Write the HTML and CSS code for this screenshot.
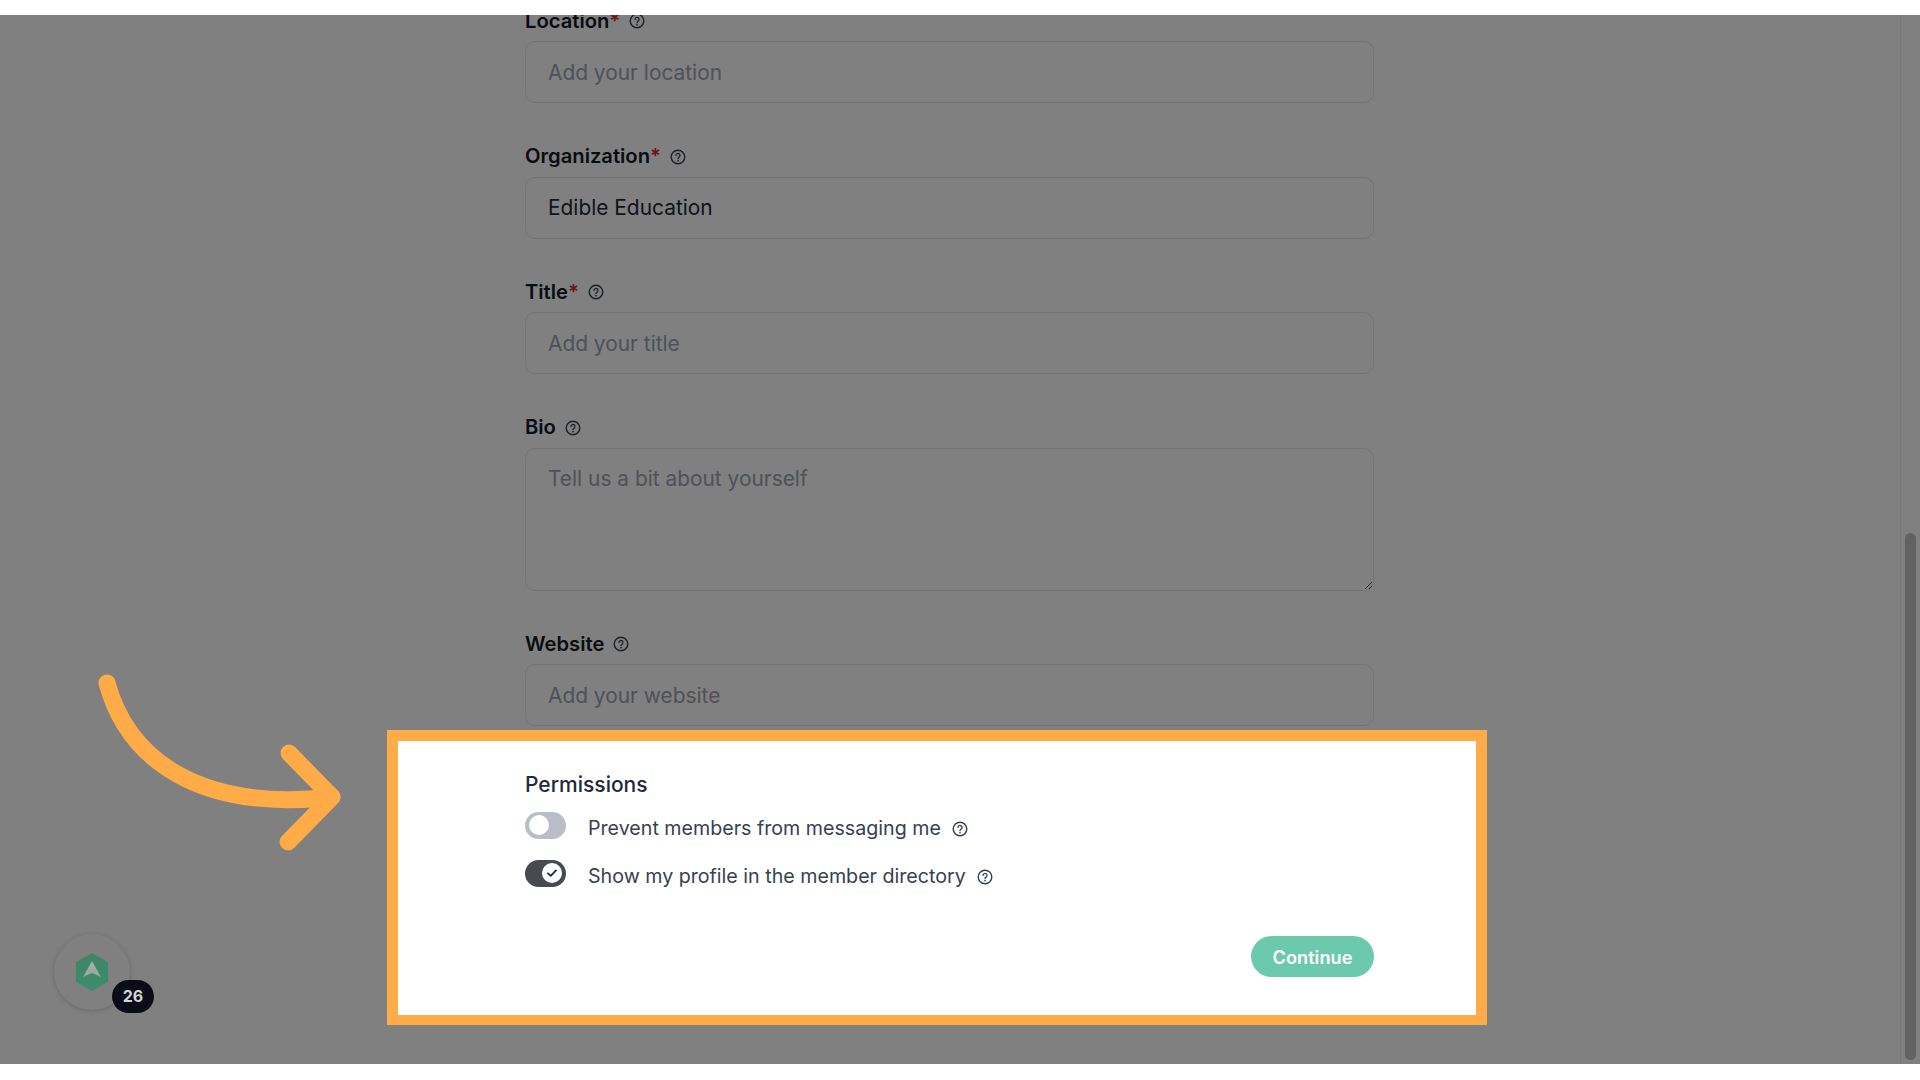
FILE: index.html
```html
<!DOCTYPE html>
<html lang="en">
<head>
  <meta charset="UTF-8">
  <title>Complete your profile</title>
  <link rel="stylesheet" href="styles.css">
</head>
<body>
  <svg class="icon-defs" width="0" height="0">
    <symbol id="help" viewBox="0 0 16 16">
      <circle cx="8" cy="8" r="6.8" fill="none" stroke="currentColor" stroke-width="1.4"/>
      <path d="M6 6.4a2 2 0 1 1 3.1 1.7c-.7.4-1.1.8-1.1 1.5" fill="none" stroke="currentColor" stroke-width="1.3" stroke-linecap="round"/>
      <circle cx="8" cy="11.6" r=".85" fill="currentColor"/>
    </symbol>
  </svg>

  <div class="stage">
    <form class="form">
      <div class="field">
        <label class="label">Location<span class="req">*</span> <svg class="help"><use href="#help"/></svg></label>
        <input class="input" type="text" placeholder="Add your location">
      </div>
      <div class="field">
        <label class="label">Organization<span class="req">*</span> <svg class="help"><use href="#help"/></svg></label>
        <input class="input" type="text" value="Edible Education">
      </div>
      <div class="field">
        <label class="label">Title<span class="req">*</span> <svg class="help"><use href="#help"/></svg></label>
        <input class="input" type="text" placeholder="Add your title">
      </div>
      <div class="field">
        <label class="label">Bio <svg class="help"><use href="#help"/></svg></label>
        <textarea class="input textarea" placeholder="Tell us a bit about yourself"></textarea>
      </div>
      <div class="field">
        <label class="label">Website <svg class="help"><use href="#help"/></svg></label>
        <input class="input" type="text" placeholder="Add your website">
      </div>
    </form>

    <div class="scrollbar"><div class="thumb"></div></div>
    <div class="overlay"></div>

    <section class="panel">
      <h3 class="panel-title">Permissions</h3>
      <div class="toggle-row">
        <span class="toggle"><span class="knob"></span></span>
        <span class="toggle-text">Prevent members from messaging me</span>
        <svg class="help"><use href="#help"/></svg>
      </div>
      <div class="toggle-row">
        <span class="toggle on">
          <span class="knob">
            <svg viewBox="0 0 12 12" width="12" height="12"><path d="M2 6.3l2.7 2.5L10 3.4" fill="none" stroke="#1f2937" stroke-width="1.8" stroke-linecap="round" stroke-linejoin="round"/></svg>
          </span>
        </span>
        <span class="toggle-text">Show my profile in the member directory</span>
        <svg class="help"><use href="#help"/></svg>
      </div>
      <div class="panel-actions">
        <button class="continue" type="button">Continue</button>
      </div>
    </section>

    <svg class="arrow" viewBox="0 0 300 200" width="300" height="200">
      <path d="M17 18C38 95 110 147 242 132" fill="none" stroke="#ffab47" stroke-width="17" stroke-linecap="round"/>
      <path d="M199 88L242 132L198 177" fill="none" stroke="#ffab47" stroke-width="17" stroke-linecap="round" stroke-linejoin="round"/>
    </svg>

    <div class="launcher">
      <svg viewBox="0 0 36 40" width="36" height="40">
        <defs>
          <linearGradient id="hex" x1="0" y1="0" x2="0" y2="1">
            <stop offset="0" stop-color="#3f8468"/>
            <stop offset="1" stop-color="#3c8c6e"/>
          </linearGradient>
          <linearGradient id="peak" x1="0" y1="0" x2="0" y2="1">
            <stop offset="0" stop-color="#a9b0ad"/>
            <stop offset="1" stop-color="#8fa89e"/>
          </linearGradient>
        </defs>
        <path d="M18 2L33 10.7V29.3L18 38L3 29.3V10.7Z" fill="url(#hex)" stroke="url(#hex)" stroke-width="2" stroke-linejoin="round"/>
        <path d="M18 9L27 25L18 21L9 25Z" fill="url(#peak)"/>
      </svg>
      <span class="badge">26</span>
    </div>
  </div>
</body>
</html>
```

FILE: styles.css
```css
* {
  box-sizing: border-box;
}
html, body {
  margin: 0;
  height: 1080px;
  overflow: hidden;
  background: white;
  font-family: Inter, "Liberation Sans", sans-serif;
}
body {
  padding-top: 15px;
}
.icon-defs {
  position: absolute;
}
.stage {
  position: relative;
  height: 1049px;
  overflow: hidden;
  background: white;
}

/* form under the dim layer */
.form {
  width: 849px;
  margin: -9px 0 0 525px;
}
.field {
  margin-bottom: 38.5px;
}
.label {
  display: flex;
  align-items: center;
  height: 28px;
  margin-bottom: 7px;
  font-size: 20.2px;
  font-weight: 600;
  color: #111827;
}
.req {
  color: #dc2626;
}
.label .help {
  margin: 2px 0 0 9px;
}
.help {
  width: 16px;
  height: 16px;
  color: #374151;
  flex-shrink: 0;
}
.input {
  display: block;
  width: 100%;
  height: 62px;
  padding: 0 22px;
  border: 1px solid #e5e7eb;
  border-radius: 10px;
  font-family: inherit;
  font-size: 20.9px;
  color: #1f2937;
  background: white;
}
.input::placeholder {
  color: #9ca3af;
  opacity: 1;
}
.textarea {
  height: 143px;
  padding-top: 16px;
  line-height: 28px;
}

.scrollbar {
  position: absolute;
  top: 0;
  right: 0;
  bottom: 0;
  width: 20px;
  border-left: 1px solid #f0f0f0;
}
.thumb {
  position: absolute;
  top: 518px;
  left: 4px;
  width: 11px;
  height: 527px;
  border-radius: 6px;
  background: #c4c4c4;
}
.overlay {
  position: absolute;
  inset: 0;
  background: rgba(0,0,0,0.498);
}

/* highlighted part above the dim layer */
.panel {
  position: absolute;
  left: 387px;
  top: 715px;
  width: 1100px;
  height: 295px;
  padding: 30px 102px 0 127px;
  border: 11px solid #ffab47;
  border-bottom-width: 10px;
  background: white;
}
.panel-title {
  margin: 0 0 12px;
  font-size: 21px;
  line-height: 28px;
  font-weight: 500;
  color: #1f2937;
}
.toggle-row {
  display: flex;
  align-items: center;
  height: 28px;
  margin-bottom: 20px;
  font-size: 19.65px;
  color: #374151;
}
.toggle {
  display: flex;
  align-items: center;
  width: 41px;
  height: 27px;
  padding: 0 4px;
  margin-right: 22px;
  border-radius: 14px;
  background: #b9bdc7;
}
.toggle.on {
  justify-content: flex-end;
  background: #474a52;
}
.knob {
  display: flex;
  align-items: center;
  justify-content: center;
  width: 20px;
  height: 20px;
  border-radius: 50%;
  background: white;
}
.toggle-text {
  margin-right: 11px;
  padding-top: 5px;
}
.toggle-row .help {
  margin-top: 7px;
}
.panel-actions {
  display: flex;
  justify-content: flex-end;
  margin-top: 49px;
}
.continue {
  width: 123px;
  height: 41px;
  border: none;
  border-radius: 21px;
  font-family: inherit;
  font-size: 18.2px;
  font-weight: 600;
  color: white;
  background: #6cc9ac;
}

.arrow {
  position: absolute;
  left: 90px;
  top: 650px;
}
.launcher {
  position: absolute;
  left: 54px;
  top: 919px;
  width: 76px;
  height: 76px;
  display: flex;
  align-items: center;
  justify-content: center;
  border-radius: 50%;
  background: #808080;
  box-shadow: 0 1px 5px rgba(0,0,0,0.18);
}
.badge {
  position: absolute;
  left: 58px;
  top: 46px;
  width: 42px;
  height: 33px;
  border-radius: 17px;
  background: #0a0d18;
  color: #d4d4d4;
  font-size: 16px;
  font-weight: 700;
  line-height: 33px;
  text-align: center;
}
```
